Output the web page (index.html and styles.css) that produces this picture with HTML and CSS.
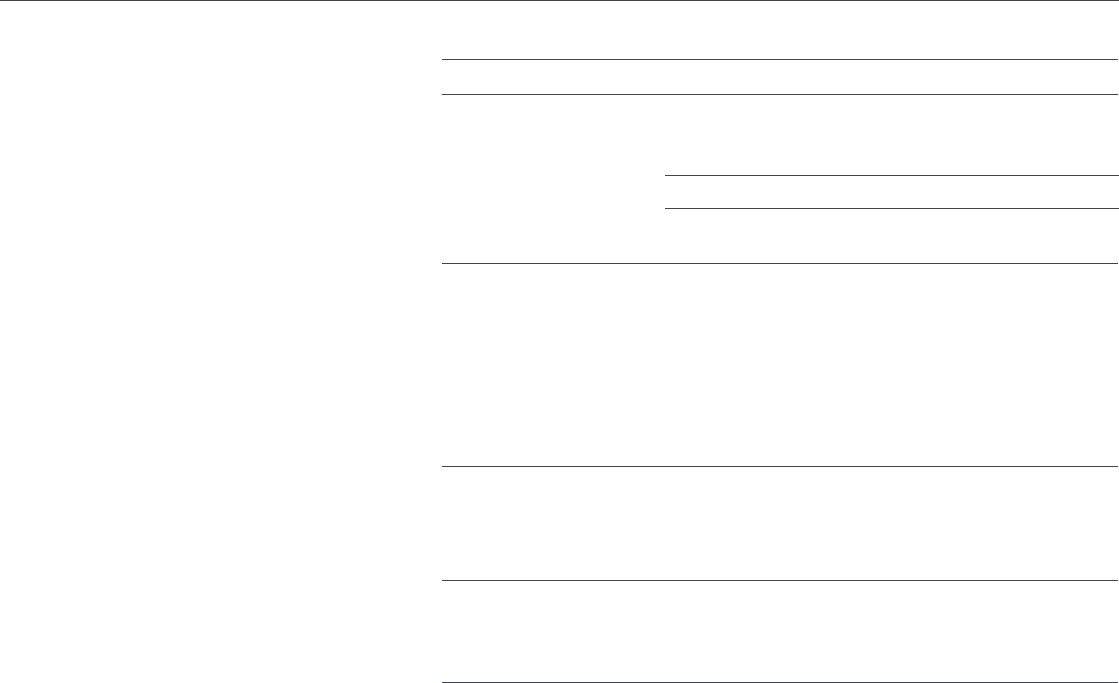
FILE: index.html
```html
<html>
<head>
  <title>layout</title>
  <link rel="stylesheet" href="styles.css">
</head>
<body>
<header class="topbar"></header>
<main class="content">
  <section class="row row-head"></section>
  <section class="row row-split">
    <div class="split-left"></div>
    <div class="split-right">
      <div class="subrow"></div>
      <div class="subrow sub-last"></div>
    </div>
  </section>
  <section class="row row-tall"></section>
  <section class="row row-mid"></section>
  <section class="row row-last"></section>
</main>
</body>
</html>
```

FILE: styles.css
```css
* {
  box-sizing: border-box;
}

body {
  margin: 0;
  background: #ffffff;
  font-family: "Liberation Sans", Arial, sans-serif;
}

.topbar {
  height: 1px;
  background: #3d464e;
}

.content {
  width: 676px;
  margin-left: 442px;
  padding-top: 58px;
}

.row {
  border-top: 1px solid #3d464e;
}

.row-head {
  height: 35px;
}

.row-split {
  height: 169px;
  display: grid;
  grid-template-columns: 223px 1fr;
}

.split-right {
  padding-top: 80px;
  margin-right: -1px;
}

.subrow {
  height: 33px;
  border-top: 1px solid #3d464e;
}

.sub-last {
  height: 1px;
}

.row-tall {
  height: 203px;
}

.row-mid {
  height: 114px;
}

.row-last {
  height: 103px;
  border-bottom: 1px solid #3d464e;
}
```
